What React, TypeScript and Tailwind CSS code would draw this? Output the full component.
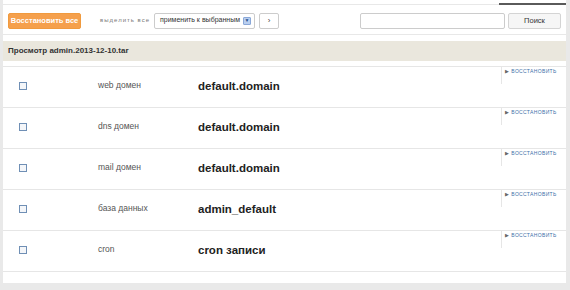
import React from "react";

const rows = [
  { label: "web домен", value: "default.domain" },
  { label: "dns домен", value: "default.domain" },
  { label: "mail домен", value: "default.domain" },
  { label: "база данных", value: "admin_default" },
  { label: "cron", value: "cron записи" },
];

function Row({ label, value }: { label: string; value: string }) {
  return (
    <div className="flex h-[41px] border-b border-[#e6e6e6] whitespace-nowrap">
      <div className="w-[95px] pl-[16px] pt-[15px]">
        <div className="w-[8px] h-[8px] border border-[#6f8fb5] bg-[#f4f6f9]" />
      </div>
      <div className="w-[100px] pt-[12px] text-[8.5px] text-[#555]">{label}</div>
      <div className="flex-1 pt-[11px] text-[11.5px] font-bold text-[#222]">{value}</div>
      <div className="w-[65px] self-start h-[17px] border-l border-[#e6e6e6] pl-[3px] flex items-start pt-[1px] gap-[2px] text-[5px] tracking-[0.35px] text-[#3d6fa8] uppercase overflow-hidden">
        <span className="text-[#666]">▶</span>
        <span>восстановить</span>
      </div>
    </div>
  );
}

export default function App() {
  return (
    <div className="h-[290px] w-[570px] bg-[#e9e9e9] font-['Liberation_Sans',Arial,sans-serif]">
      <div className="ml-[3px] w-[563px] h-[283px] bg-white">
        <div className="relative h-[5px] border-b border-[#e8e8e8]">
          <div className="absolute right-0 top-[3px] w-[67px] h-[2px] bg-[#5a5a5a]" />
        </div>

        {/* toolbar */}
        <div className="flex items-center h-[30px] pt-[2px] px-[5px] border-b border-[#e8e8e8] whitespace-nowrap">
          <button className="h-[16px] w-[73px] bg-[#f5a04c] border border-[#f09a3e] rounded-[2px] text-white text-[7.5px] font-bold">
            Восстановить все
          </button>
          <span className="ml-[19px] text-[6px] tracking-[1px] text-[#777]">выделить все</span>
          <div className="ml-[4px] h-[16px] w-[101px] border border-[#ccc] rounded-[2px] flex items-center pl-[5px] pr-[3px] justify-between bg-white">
            <span className="text-[7px] text-[#333]">применить к выбранным</span>
            <span className="w-[8px] h-[8px] rounded-[1px] bg-[#b9cff0] border border-[#8aa8d8] flex items-center justify-center text-[#2b4f8a] text-[5px] leading-none">▼</span>
          </div>
          <button className="ml-[4px] h-[16px] w-[20px] border border-[#ccc] rounded-[2px] bg-white text-[8px] text-[#444] leading-none">›</button>
          <div className="ml-[81px] h-[16px] w-[145px] border border-[#ccc] rounded-[2px] bg-white" />
          <button className="ml-[3px] h-[16px] w-[53px] border border-[#d4d4d4] rounded-[2px] bg-[#f6f6f6] text-[7.5px] text-[#333]">Поиск</button>
        </div>

        <div className="mt-[6px] h-[20px] bg-[#eae7dd] flex items-center pl-[5px] text-[8px] font-bold text-[#333]">
          Просмотр admin.2013-12-10.tar
        </div>
        <div className="h-[6px] border-b border-[#e6e6e6]" />

        {rows.map((r, i) => (
          <Row key={i} label={r.label} value={r.value} />
        ))}
      </div>
    </div>
  );
}
